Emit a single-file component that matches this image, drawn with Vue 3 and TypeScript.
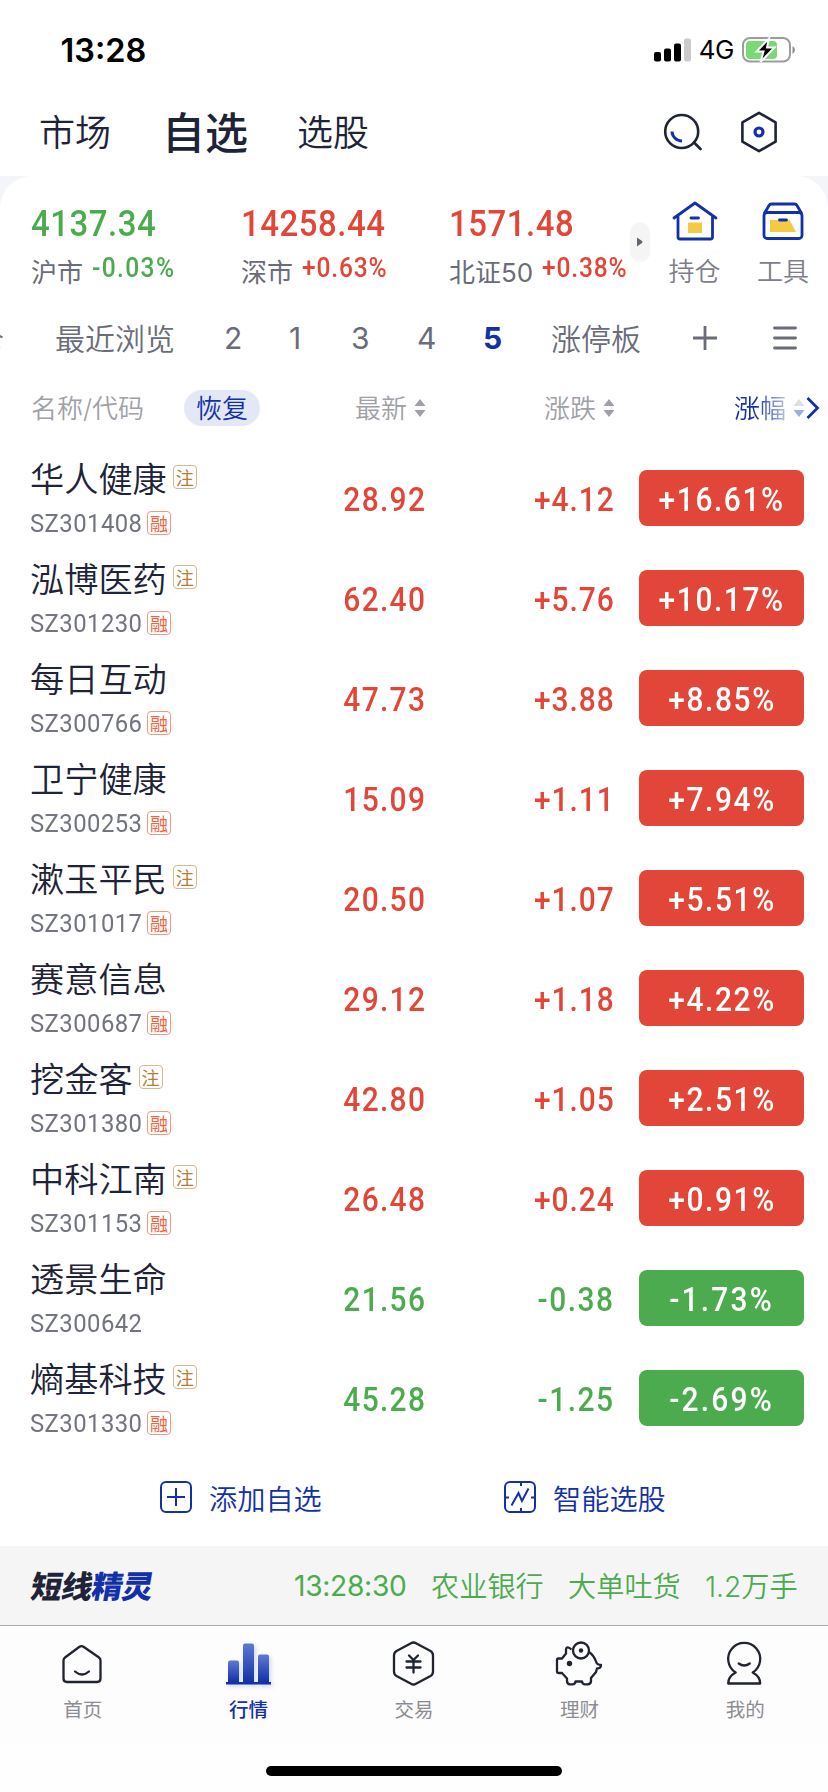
<script setup lang="ts">
interface Index { value: string; name: string; change: string; dir: 'up' | 'down' }
interface Stock { name: string; code: string; reg: boolean; margin: boolean; price: string; diff: string; pct: string }

const indexes: Index[] = [
  { value: '4137.34', name: '沪市', change: '-0.03%', dir: 'down' },
  { value: '14258.44', name: '深市', change: '+0.63%', dir: 'up' },
  { value: '1571.48', name: '北证50', change: '+0.38%', dir: 'up' },
]

const stock = (name: string, code: string, reg: boolean, margin: boolean, price: string, diff: string, pct: string): Stock =>
  ({ name, code, reg, margin, price, diff, pct })

const stocks: Stock[] = [
  stock('华人健康', 'SZ301408', true, true, '28.92', '+4.12', '+16.61%'),
  stock('泓博医药', 'SZ301230', true, true, '62.40', '+5.76', '+10.17%'),
  stock('每日互动', 'SZ300766', false, true, '47.73', '+3.88', '+8.85%'),
  stock('卫宁健康', 'SZ300253', false, true, '15.09', '+1.11', '+7.94%'),
  stock('漱玉平民', 'SZ301017', true, true, '20.50', '+1.07', '+5.51%'),
  stock('赛意信息', 'SZ300687', false, true, '29.12', '+1.18', '+4.22%'),
  stock('挖金客', 'SZ301380', true, true, '42.80', '+1.05', '+2.51%'),
  stock('中科江南', 'SZ301153', true, true, '26.48', '+0.24', '+0.91%'),
  stock('透景生命', 'SZ300642', false, false, '21.56', '-0.38', '-1.73%'),
  stock('熵基科技', 'SZ301330', true, true, '45.28', '-1.25', '-2.69%'),
]

const direction = (s: Stock) => (s.diff.startsWith('-') ? 'down' : 'up')
</script>

<template>
  <div class="screen">
    <header class="status">
      <span class="clock">13:28</span>
      <span class="signals">
        <svg class="bars" width="37" height="24" viewBox="0 0 37 24">
          <rect x="0" y="14" width="7" height="9.5" rx="2" />
          <rect x="10" y="10.500" width="7" height="13" rx="2" />
          <rect x="20" y="5.500" width="7" height="18" rx="2" />
          <rect x="30" y="0.500" width="7" height="23" rx="2" fill="#cbcbcb" />
        </svg>
        <span class="network">4G</span>
        <svg class="battery" width="54" height="26" viewBox="0 0 54 26">
          <rect x="1" y="1" width="47" height="23.500" rx="7" fill="none" stroke="#9c9c9c" stroke-width="2" />
          <path d="M50.500 9 Q53 10.500 53 13 T50.500 17z" fill="#8e8e8e" />
          <rect x="4" y="4" width="31" height="18" rx="4" fill="#79d974" />
          <path d="M27 1.500 L14.500 14.500 H21.500 L18.500 25 L32.500 10.500 H25z" fill="#000" stroke="#fff" stroke-width="2" />
        </svg>
      </span>
    </header>

    <nav class="top">
      <span class="side market">市场</span>
      <span class="main">自选</span>
      <span class="side pick">选股</span>
      <span class="grow"></span>
      <svg width="40" height="42" viewBox="0 0 40 42" fill="none" stroke="#1e2338" stroke-width="2.600">
        <circle cx="19.700" cy="20.500" r="16.500" />
        <path d="M32 31.500 L38.500 38" stroke-linecap="round" />
        <path d="M10 20.500 A 10 10 0 0 0 20 30" stroke="#1231a8" stroke-width="3" />
      </svg>
      <svg class="gear" width="40" height="44" viewBox="0 0 40 44" fill="none" stroke="#1e2338" stroke-width="2.600">
        <path d="M20 2.800 L36.600 12.300 V31.700 L20 41.200 L3.400 31.700 V12.300z" stroke-linejoin="round" />
        <circle cx="20" cy="22" r="4" stroke="#1231a8" stroke-width="3.200" />
      </svg>
    </nav>

    <div class="backdrop">
      <section class="panel">
        <div class="indexes">
          <div v-for="i in indexes" :key="i.name" class="index">
            <div class="value" :class="i.dir">{{ i.value }}</div>
            <div class="detail"><span class="market-name">{{ i.name }}</span><b :class="i.dir">{{ i.change }}</b></div>
          </div>
          <span class="expand">
            <svg width="8" height="10" viewBox="0 0 8 10"><path d="M1 .5 L6 4 Q7 5 6 6 L1 9.500z" fill="#62646f" /></svg>
          </span>
          <div class="shortcut hold">
            <svg width="46" height="42" viewBox="0 0 46 42" fill="none" stroke="#1231a8" stroke-width="2.800" stroke-linecap="round" stroke-linejoin="round">
              <rect x="16" y="22.500" width="14" height="10.500" fill="#f6c945" stroke="none" />
              <path d="M2 18 L23 3 L44 18 M6 16 V37 Q6 39 8 39 H38.500 Q40.500 39 40.500 37 V16 M19 18 H26.500" />
            </svg>
            <span>持仓</span>
          </div>
          <div class="shortcut tool">
            <svg width="46" height="42" viewBox="0 0 46 42" fill="none" stroke="#1231a8" stroke-width="2.800" stroke-linejoin="round">
              <path d="M10 20 H29.500 L36 32 H10z" fill="#f6c945" stroke="none" />
              <path d="M4 14 L9 5.500 Q9.800 4 11.500 4 H34.500 Q36.200 4 37 5.500 L42 14" />
              <rect x="4" y="12.500" width="38" height="26" rx="3" />
              <path d="M19.500 20 H26.500" stroke-linecap="round" />
            </svg>
            <span>工具</span>
          </div>
        </div>

        <div class="groups">
          <span class="cut">持仓</span>
          <span class="recent">最近浏览</span>
          <span class="n">2</span><span class="n n1">1</span><span class="n n3">3</span><span class="n n4">4</span><span class="n on">5</span>
          <span class="limit">涨停板</span>
          <svg class="plus" width="24" height="24" viewBox="0 0 24 24" stroke="#6a6c79" stroke-width="2.800"><path d="M0 12 H24 M12 0 V24" /></svg>
          <svg class="menu" width="24" height="24" viewBox="0 0 24 24" stroke="#6a6c79" stroke-width="2.800" stroke-linecap="round"><path d="M1.500 2 H22.500 M1.500 12 H22.500 M1.500 22 H22.500" /></svg>
        </div>

        <div class="columns">
          <span class="c-name lift">名称/代码</span>
          <span class="restore"><span class="lift">恢复</span></span>
          <span class="sort latest"><span class="lift">最新</span><svg width="12" height="18" viewBox="0 0 12 18" fill="#a0a1a8"><path d="M6 0 L11.500 7 H.5z M6 18 L11.500 11 H.5z" /></svg></span>
          <span class="sort delta"><span class="lift">涨跌</span><svg width="12" height="18" viewBox="0 0 12 18" fill="#a0a1a8"><path d="M6 0 L11.500 7 H.5z M6 18 L11.500 11 H.5z" /></svg></span>
          <span class="sort rate"><span class="fade lift">涨幅</span><svg width="12" height="18" viewBox="0 0 12 18"><path d="M6 0 L11.500 7 H.5z" fill="#dedfe5" /><path d="M6 18 L11.500 11 H.5z" fill="#9eaddc" /></svg></span>
          <svg class="next" width="14" height="24" viewBox="0 0 14 24" fill="none" stroke="#1231a8" stroke-width="2.800"><path d="M1.500 2 L11.500 12 L1.500 22" /></svg>
        </div>

        <ul class="list">
          <li v-for="s in stocks" :key="s.code" class="row">
            <div class="ident">
              <div class="name">{{ s.name }}<i v-if="s.reg" class="tag reg">注</i></div>
              <div class="code"><span class="code-text">{{ s.code }}</span><i v-if="s.margin" class="tag margin">融</i></div>
            </div>
            <span class="num price" :class="direction(s)">{{ s.price }}</span>
            <span class="num diff" :class="direction(s)">{{ s.diff }}</span>
            <span class="badge" :class="direction(s)"><span class="num">{{ s.pct }}</span></span>
          </li>
        </ul>

        <div class="actions">
          <span class="action">
            <svg width="32" height="32" viewBox="0 0 32 32" fill="none" stroke="#1231a8" stroke-width="2"><rect x="1" y="1" width="30" height="30" rx="5" /><path d="M7 16 H25 M16 7 V25" /></svg>
            添加自选
          </span>
          <span class="action smart">
            <svg width="32" height="32" viewBox="0 0 32 32" fill="none" stroke="#1231a8" stroke-width="2"><rect x="1" y="1" width="30" height="30" rx="5" /><path d="M17 1 V5 M17 27 V31 M1 16.500 H5 M27 16.500 H31 M7.500 24.500 L14.500 12 L18 20 L24.500 7.500" /></svg>
            智能选股
          </span>
        </div>
      </section>
    </div>

    <section class="ticker">
      <span class="logo">短线<em>精灵</em></span>
      <span class="t-time">13:28:30</span><span class="t-name">农业银行</span><span class="t-event">大单吐货</span><span class="t-vol">1.2万手</span>
    </section>

    <nav class="tabs">
      <div class="tab">
        <svg width="50" height="50" viewBox="1.500 0 50 50" fill="none" stroke="#1f2430" stroke-width="2.300" stroke-linecap="round" stroke-linejoin="round">
          <path d="M23 6.800 Q25 5.400 27 6.800 L42.500 17.500 Q44 18.600 44 20.500 V38.500 Q44 42 40.500 42 H10.500 Q7 42 7 38.500 V20.500 Q7 18.600 8.500 17.500z" />
          <path d="M18.500 31.500 Q25.500 37.500 32.500 31.500" />
        </svg>
        <span>首页</span>
      </div>
      <div class="tab active">
        <svg class="glow" width="50" height="50" viewBox="0 0 50 50">
          <defs><linearGradient id="bar" x1="0" y1="0" x2="0" y2="1"><stop offset="0" stop-color="#6079d2" /><stop offset="1" stop-color="#1231a8" /></linearGradient></defs>
          <g fill="url(#bar)"><path d="M5 42 V22.500 Q5 20.500 7 20.500 H14 Q16 20.500 16 22.500 V42z" /><path d="M20 42 V5.500 Q20 3.500 22 3.500 H29 Q31 3.500 31 5.500 V42z" /><path d="M35 42 V16.500 Q35 14.500 37 14.500 H44 Q46 14.500 46 16.500 V42z" /></g>
          <rect x="3" y="42" width="45" height="2.500" fill="#1231a8" />
        </svg>
        <span>行情</span>
      </div>
      <div class="tab">
        <svg width="50" height="50" viewBox="0.500 0 50 50" fill="none" stroke="#1f2430" stroke-width="2.300" stroke-linecap="round" stroke-linejoin="round">
          <path d="M22.500 3.200 Q25 1.800 27.500 3.200 L42 11 Q44.500 12.500 44.500 15.500 V31.500 Q44.500 34.500 42 36 L27.500 43.800 Q25 45.200 22.500 43.800 L8 36 Q5.500 34.500 5.500 31.500 V15.500 Q5.500 12.500 8 11z" />
          <path d="M20.500 15.500 L25 20 L29.500 15.500 M25 20 V32.500 M18 21.500 H32 M18 27.500 H32" />
        </svg>
        <span>交易</span>
      </div>
      <div class="tab">
        <svg width="50" height="50" viewBox="2.500 0 50 50" fill="none" stroke="#1f2430" stroke-width="2.300" stroke-linejoin="round">
          <path d="M19 9.500 Q14.500 5.500 13.500 9 V13.500 L9.500 18.500 H6 Q4.500 18.500 4.500 20 V32 Q4.500 33 6 33 H9.500 L14.500 38.500 V41 Q14.500 44.300 17.500 44.300 H20 Q22.500 44.300 23 41.500 H29.500 Q30 44.300 32.500 44.300 H35 Q38.500 44.300 38.500 41 V38 L43.500 32 L44.500 28.500 Q48.500 28.500 48.500 25 Q44.500 25 43.500 21.500 Q41.500 15.500 36.500 12" />
          <circle cx="28.500" cy="10.500" r="8" /><circle cx="28.500" cy="10.500" r="2.200" fill="#1f2430" stroke="none" /><circle cx="17" cy="23.500" r="2.700" fill="#1f2430" stroke="none" />
        </svg>
        <span>理财</span>
      </div>
      <div class="tab">
        <svg width="50" height="50" viewBox="0.800 0 50 50" fill="none" stroke="#1f2430" stroke-width="2.300" stroke-linecap="round" stroke-linejoin="round">
          <path d="M16.500 32.500 A16 16 0 1 1 33.500 32.500 Q41 36.500 41 43.500 H9 Q9 36.500 16.500 32.500z" />
          <path d="M19.500 23.500 Q25 27.500 30.500 23.500" />
        </svg>
        <span>我的</span>
      </div>
    </nav>
    <div class="home-bar"></div>
  </div>
</template>

<style>
body { background: #fff; }
</style>

<style scoped>
* { box-sizing: border-box; }
.screen {
  width: 828px; height: 1792px; overflow: hidden; display: flex; flex-direction: column;
  background: #fefefe; color: #1e2338; white-space: nowrap;
  font-family: Inter, "Noto Sans CJK SC", sans-serif; font-weight: 350;
}
svg { display: block; flex: none; }
.up { color: #e24638; }
.down { color: #4cab4f; }
.grow { flex: 1; }
.lift { transform: translateY(-2px); }

.status { height: 88px; padding: 12px 32px 0 60.5px; display: flex; align-items: center; justify-content: space-between; color: #000; background: #fff; }
.clock { font: 600 32.500px/40px Inter, sans-serif; margin-top: 2px; }
.signals { display: flex; align-items: center; }
.network { font: 400 26px/30px Inter, sans-serif; margin: 0 8px 0 8px; letter-spacing: -.5px; }

.top { height: 88px; padding: 0 49px 0 39px; display: flex; align-items: center; background: #fff; }
.side { font-size: 36px; line-height: 50px; margin-top: 1px; }
.main { font-size: 43px; font-weight: 500; line-height: 60px; margin: 2px 49px 0 51px; }
.gear { margin-left: 37px; }

.backdrop { background: #f4f5f9; height: 1370px; flex: none; }
.panel { height: 100%; background: #fff; border-radius: 32px 32px 0 0; }

.indexes { height: 130px; display: grid; grid-template-columns: 210px 208px 181px 20px 89px 88px; padding-left: 31px; align-items: start; }
.value { font: 500 37px/44px Roboto, sans-serif; letter-spacing: .6px; margin-top: 26px; transform: scaleX(.89); transform-origin: left; }
.detail { display: flex; align-items: center; height: 34px; margin-top: 7px; font-size: 26px; color: #6a6c79; }
.market-name { font-weight: 370; }
.detail b { font: 500 27px/34px Roboto, sans-serif; letter-spacing: .9px; margin-left: 9px; margin-top: -4px; transform: scaleX(.91); transform-origin: left; }
.detail b.down { letter-spacing: 1.500px; }
.expand { width: 20px; height: 40px; margin-top: 46px; border-radius: 10px; background: #f5f5f5; display: flex; align-items: center; justify-content: center; }
.shortcut { display: flex; flex-direction: column; align-items: center; font-size: 26px; line-height: 34px; color: #7d7f89; margin-top: 24px; }
.shortcut span { margin-top: 13px; }

.groups { height: 64px; display: flex; align-items: center; font-size: 30px; color: #6a6c79; overflow: hidden; }
.cut { width: 55px; direction: rtl; padding-right: 51px; margin-top: -3px; }
.recent { width: 169px; margin-top: -3px; }
.n { width: 65px; font-weight: 400; }
.n1 { width: 62px; }
.n3 { width: 66px; }
.n4 { width: 66px; }
.on { width: 68px; color: #1231a8; font-weight: 700; }
.limit { width: 142px; margin-top: -3px; }
.menu { margin-left: 56px; }

.columns { height: 76px; display: flex; align-items: center; font-size: 26px; color: #a0a1a8; padding-left: 31px; }
.c-name { width: 153px; }
.restore { width: 76px; height: 36px; border-radius: 18px; background: #e4e8f6; color: #1231a8; display: flex; align-items: center; justify-content: center; }
.sort { display: flex; align-items: center; gap: 7px; }
.latest { width: 189px; margin-left: 95px; }
.delta { width: 190px; }
.rate { width: 72px; }
.fade { background: linear-gradient(90deg, #1231a8 40%, #b8c4e8); background-clip: text; color: transparent; }

.list { list-style: none; margin: 0; padding: 4px 24px 0 30px; }
.row { height: 100px; display: grid; grid-template-columns: 300px 96px 188.500px 24.500px 165px; align-items: center; }
.ident { align-self: start; }
.name { display: flex; align-items: center; height: 46px; font-size: 34.200px; margin-top: 4px; }
.code { display: flex; align-items: center; height: 30px; margin-top: 8px; color: #72747f; }
.code-text { width: 111px; font: 450 26.500px/30px Roboto, sans-serif; letter-spacing: .5px; transform: scaleX(.9); transform-origin: left; margin-top: -1px; }
.tag { width: 24px; height: 24px; border: 1px solid; border-radius: 4px; display: flex; align-items: center; justify-content: center; font: 400 18px/22px "Noto Sans CJK SC", sans-serif; }
.reg { margin-left: 6px; color: #b87d35; border-color: #d8b88c; }
.margin { margin-left: 6px; color: #eb6542; border-color: #f19a83; }
.num { font: 500 34px/40px Roboto, sans-serif; letter-spacing: 1.500px; transform: scaleX(.88); transform-origin: right; margin-top: -2px; }
.price { text-align: right; justify-self: end; }
.diff { text-align: right; justify-self: end; letter-spacing: 1.100px; }
.diff.down { letter-spacing: 1.700px; }
.badge { grid-column: 5; height: 56px; margin-top: -4px; border-radius: 8px; display: flex; align-items: center; justify-content: center; }
.badge .num { color: #fff; letter-spacing: 1.800px; transform-origin: center; margin: 2px 0 0 1px; }
.badge.up { background: #e24638; }
.badge.down { background: #4cab4f; }
.badge.down .num { letter-spacing: 2.500px; }

.actions { height: 94px; padding: 0 0 0 160px; display: flex; align-items: center; color: #1231a8; font-size: 28.200px; }
.action { width: 344px; flex: none; display: flex; align-items: center; gap: 17px; }

.ticker { height: 80px; flex: none; background: #f5f5f5; border-bottom: 1px solid #aaa; padding-left: 32px; display: flex; align-items: center; font-size: 28.200px; color: #4cab4f; }
.logo { width: 262px; font-size: 31px; font-weight: 900; letter-spacing: -.7px; color: #1e2338; transform: skewX(-10deg); margin-top: -3px; }
.logo em { font-style: normal; color: #1231a8; }
.t-time { width: 137px; font-weight: 400; letter-spacing: -.3px; }
.t-name, .t-event { width: 137px; }
.t-name, .t-event, .t-vol { margin-top: -2px; }

.tabs { height: 118px; flex: none; background: #fdfdfd; display: grid; grid-template-columns: repeat(5, 1fr); padding-top: 14px; }
.tab { display: flex; flex-direction: column; align-items: center; font-size: 19.500px; line-height: 28px; color: #8c8d92; font-weight: 400; }
.tab span { margin-top: 6px; }
.tab.active { color: #1231a8; font-weight: 500; }
.glow { filter: drop-shadow(2px 2px 2px #1231a830); }
.home-bar { width: 296px; height: 10px; border-radius: 5px; background: #000; margin: 22px auto 0; flex: none; }
</style>
